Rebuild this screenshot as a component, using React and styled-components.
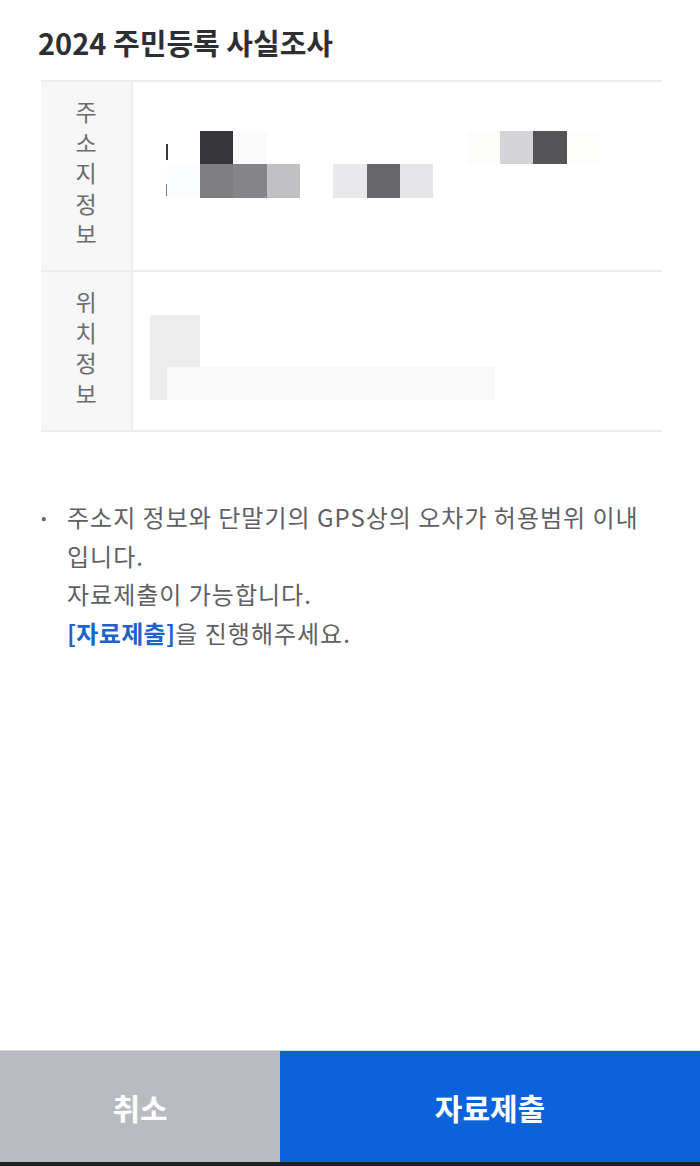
import React from "react";
import styled, { createGlobalStyle } from "styled-components";

const GlobalStyle = createGlobalStyle`
  html, body {
    margin: 0;
    padding: 0;
    background: #ffffff;
  }
  body {
    font-family: "Noto Sans CJK KR", "Noto Sans", sans-serif;
    -webkit-font-smoothing: antialiased;
  }
`;

const mosaicAddress = [
  { x: 67, y: 49, w: 33, h: 33, c: "#36363a" },
  { x: 100, y: 49, w: 34, h: 33, c: "#fbfbfb" },
  { x: 334, y: 49, w: 33, h: 33, c: "#fcfcfb" },
  { x: 367, y: 49, w: 33, h: 33, c: "#d4d4d8" },
  { x: 400, y: 49, w: 34, h: 33, c: "#545456" },
  { x: 434, y: 49, w: 33, h: 33, c: "#fdfdfb" },
  { x: 34, y: 82, w: 33, h: 34, c: "#fbfcfd" },
  { x: 67, y: 82, w: 33, h: 34, c: "#7f7f81" },
  { x: 100, y: 82, w: 34, h: 34, c: "#858589" },
  { x: 134, y: 82, w: 33, h: 34, c: "#c0c0c2" },
  { x: 200, y: 82, w: 34, h: 34, c: "#e9e9eb" },
  { x: 234, y: 82, w: 33, h: 34, c: "#68686c" },
  { x: 267, y: 82, w: 33, h: 34, c: "#e5e5e8" },
  { x: 33, y: 62, w: 2, h: 16, c: "#3a3a3c" },
  { x: 33, y: 102, w: 1, h: 12, c: "#808080" },
];

const mosaicLocation = [
  { x: 17, y: 43, w: 50, h: 85, c: "#ededed" },
  { x: 34, y: 95, w: 328, h: 33, c: "#f8f8f8" },
];

const rows = [
  { label: "주소지정보", height: 188, blocks: mosaicAddress },
  { label: "위치정보", height: 158, blocks: mosaicLocation },
];

const Mosaic = ({ blocks }) => (
  <MosaicSvg viewBox="0 0 529 188" preserveAspectRatio="xMinYMin slice">
    {blocks.map((b, i) => (
      <rect key={i} x={b.x} y={b.y} width={b.w} height={b.h} fill={b.c} />
    ))}
  </MosaicSvg>
);

const App = () => {
  return (
    <>
      <GlobalStyle />
      <Page>
        <Title>2024 주민등록 사실조사</Title>

        <InfoTable>
          {rows.map((row) => (
            <InfoRow key={row.label} height={row.height}>
              <LabelCell>
                <LabelText>{row.label}</LabelText>
              </LabelCell>
              <ValueCell>
                <Mosaic blocks={row.blocks} />
              </ValueCell>
            </InfoRow>
          ))}
        </InfoTable>

        <Notice>
          <Bullet>•</Bullet>
          <NoticeText>
            주소지 정보와 단말기의 GPS상의 오차가 허용범위 이내 입니다.
            <br />
            자료제출이 가능합니다.
            <br />
            <Link>[자료제출]</Link>을 진행해주세요.
          </NoticeText>
        </Notice>

        <Spacer />

        <ButtonBar>
          <ActionButton kind="cancel">취소</ActionButton>
          <ActionButton kind="submit">자료제출</ActionButton>
        </ButtonBar>
        <NavStrip />
      </Page>
    </>
  );
};

export default App;

const Page = styled.div`
  width: 700px;
  height: 1166px;
  display: flex;
  flex-direction: column;
  background: #ffffff;
  overflow: hidden;
`;

const Title = styled.h1`
  margin: 0;
  padding: 22px 0 0 38px;
  font-size: 29px;
  line-height: 40px;
  font-weight: 700;
  color: #2e2f33;
  letter-spacing: 0;
`;

const InfoTable = styled.div`
  margin: 18px 38px 0 41px;
  border-top: 2px solid #ececec;
`;

const InfoRow = styled.div`
  display: flex;
  height: ${(p) => p.height}px;
  border-bottom: 2px solid #ececec;
`;

const LabelCell = styled.div`
  width: 92px;
  flex-shrink: 0;
  background: #f7f7f7;
  border-right: 2px solid #ececec;
  display: flex;
  align-items: center;
  justify-content: center;
  padding-bottom: 6px;
  box-sizing: border-box;
`;

const LabelText = styled.span`
  writing-mode: vertical-rl;
  text-orientation: upright;
  font-size: 23px;
  line-height: 30px;
  letter-spacing: 7.5px;
  color: #6b6c70;
  margin-bottom: -7.5px;
`;

const ValueCell = styled.div`
  flex: 1;
  position: relative;
  overflow: hidden;
`;

const MosaicSvg = styled.svg`
  display: block;
  width: 529px;
  height: 188px;
`;

const Notice = styled.div`
  display: flex;
  margin: 66px 30px 0 41px;
`;

const Bullet = styled.span`
  width: 26px;
  flex-shrink: 0;
  font-size: 16px;
  line-height: 38.5px;
  color: #6b6c70;
`;

const NoticeText = styled.p`
  margin: 0;
  font-size: 24px;
  line-height: 38.5px;
  color: #5f6065;
  letter-spacing: 1px;
  max-width: 600px;
`;

const Link = styled.span`
  color: #1b64cf;
  font-weight: 700;
  letter-spacing: 0.3px;
`;

const Spacer = styled.div`
  flex: 1;
`;

const ButtonBar = styled.div`
  display: flex;
  height: 111px;
  border-top: 1px solid #d6d7db;
`;

const ActionButton = styled.button`
  border: none;
  margin: 0;
  padding: 0;
  font-family: inherit;
  font-size: 30px;
  font-weight: 700;
  color: #ffffff;
  letter-spacing: 0;
  width: ${(p) => (p.kind === "cancel" ? "280px" : "420px")};
  background: ${(p) => (p.kind === "cancel" ? "#b9bbc1" : "#0b62da")};
  cursor: pointer;
`;

const NavStrip = styled.div`
  height: 4px;
  background: #1e1f22;
`;
